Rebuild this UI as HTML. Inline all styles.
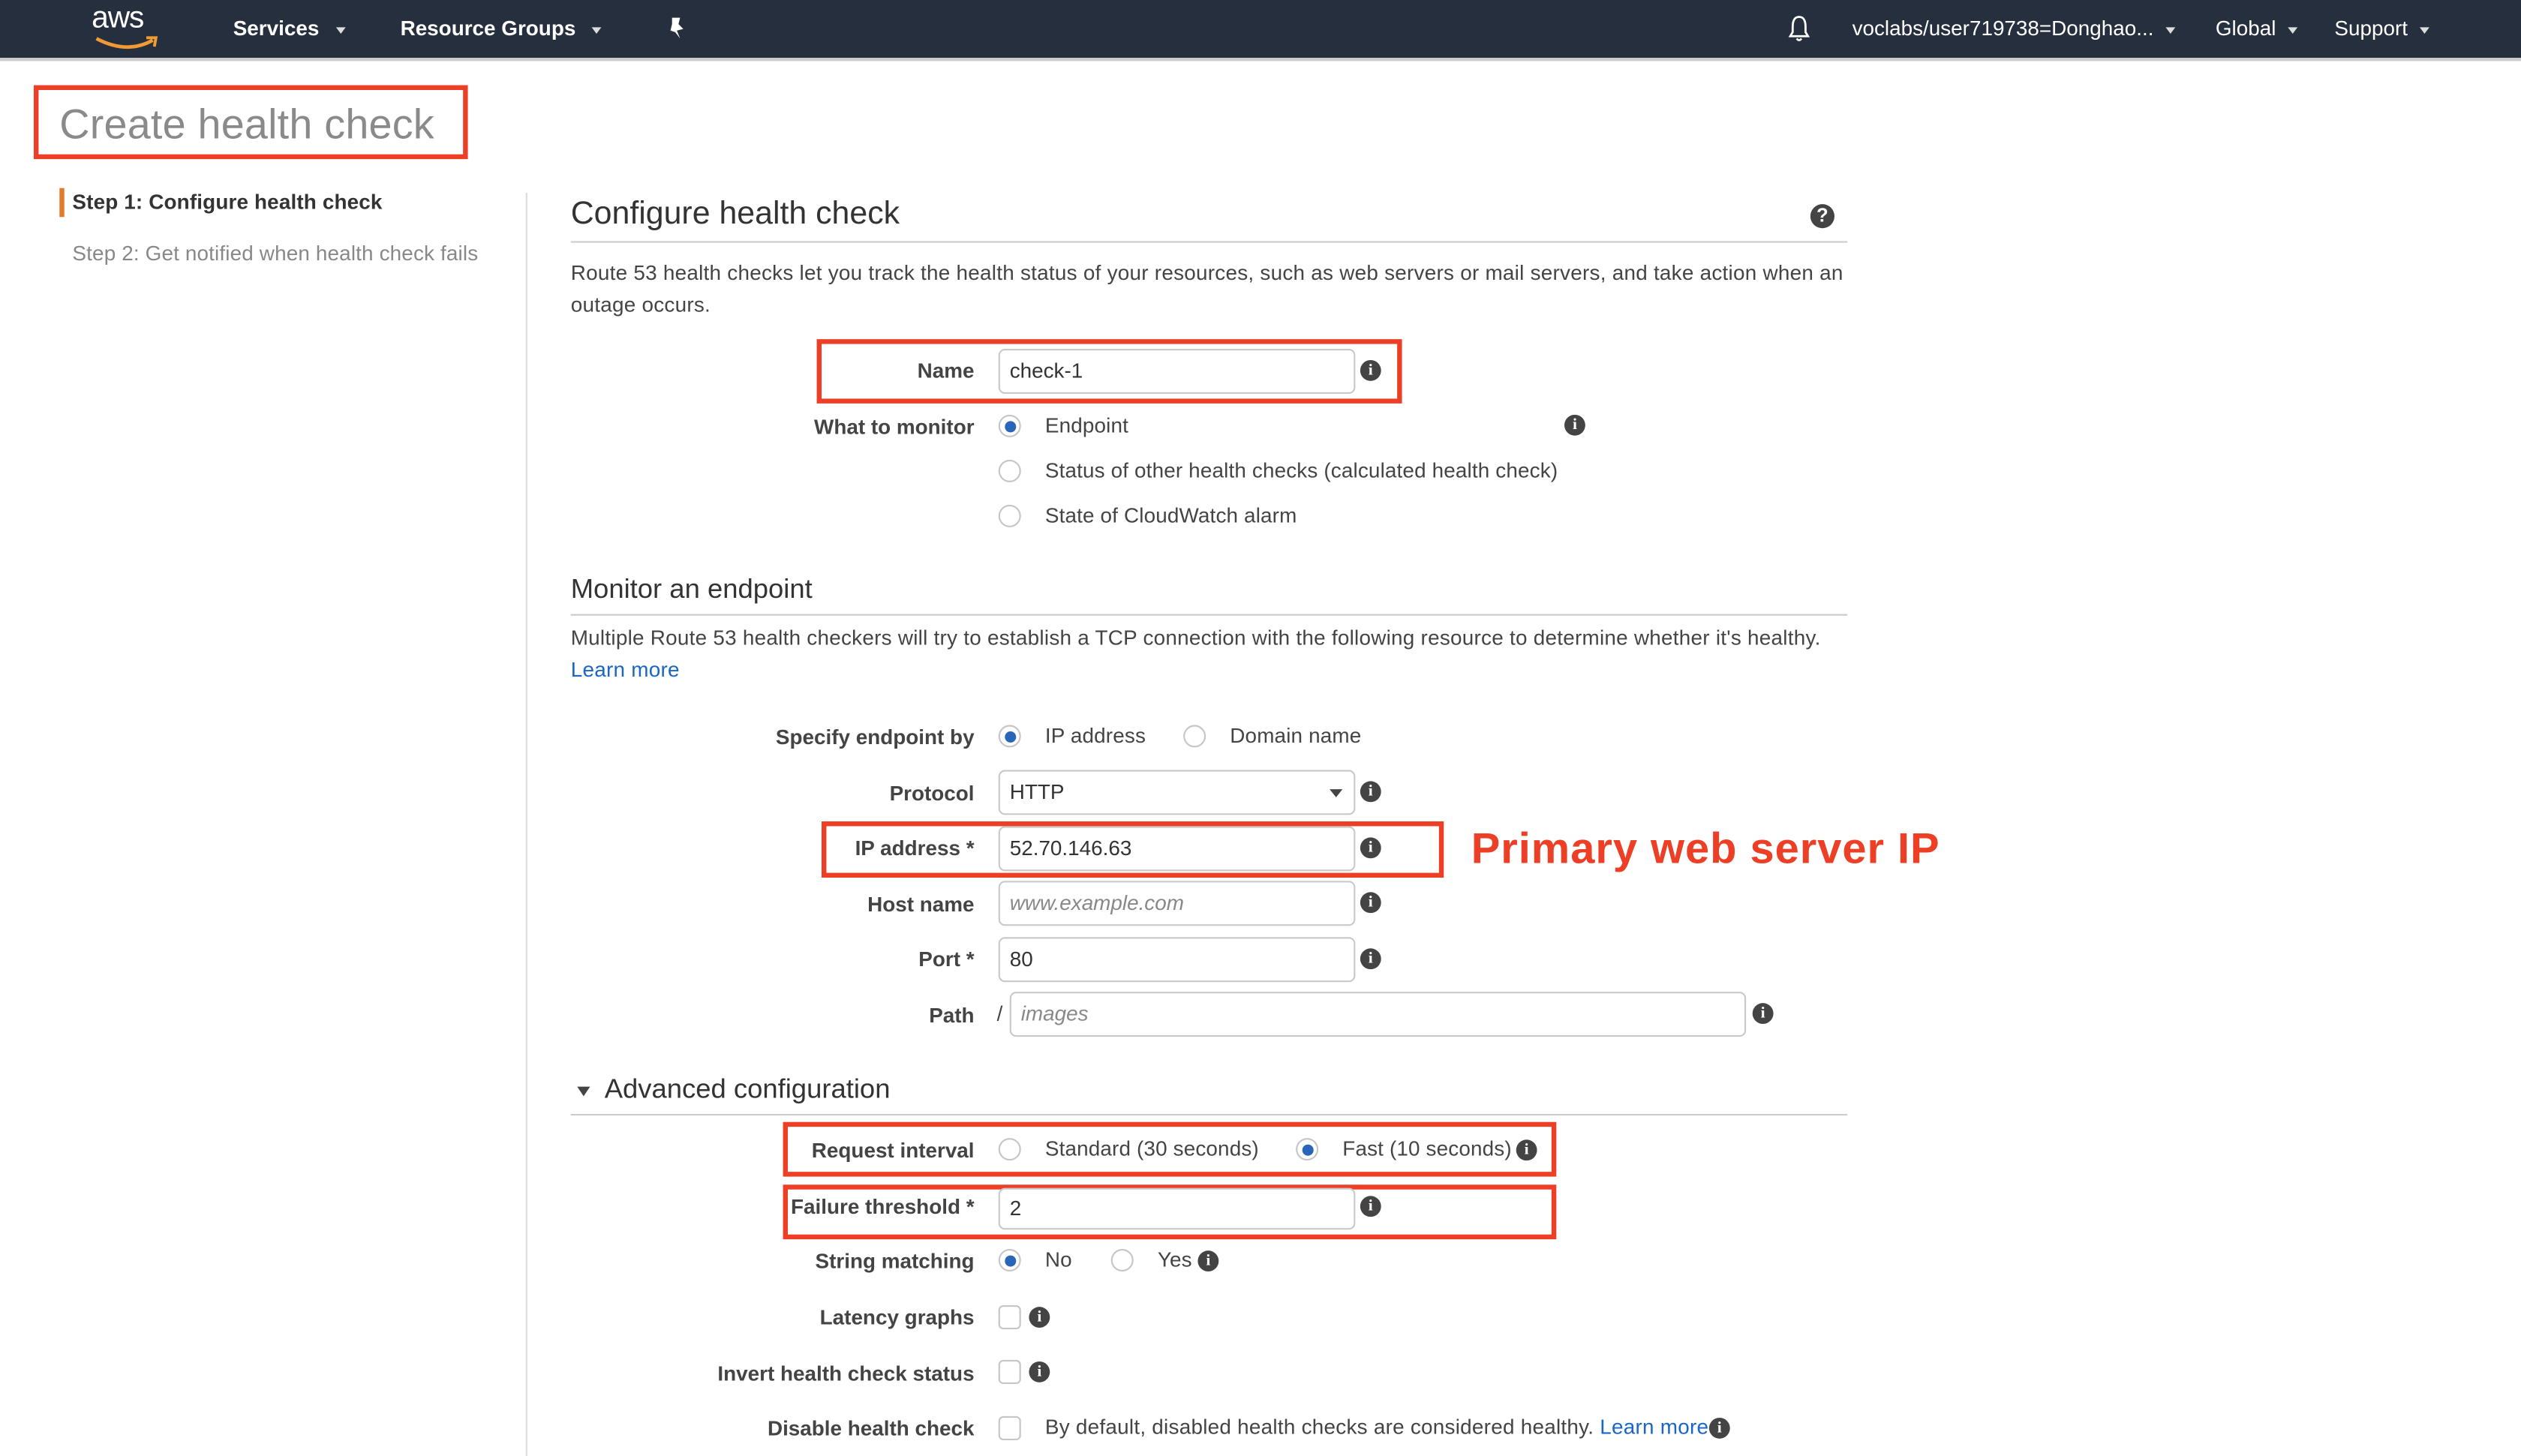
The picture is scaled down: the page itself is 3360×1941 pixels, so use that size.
<!DOCTYPE html>
<html><head><meta charset="utf-8"><style>
html,body{margin:0;padding:0;background:#fff;overflow:hidden}
#w{position:absolute;left:0;top:0;width:1568px;height:906px;transform:scale(2.142857);transform-origin:0 0;font-family:"Liberation Sans",Arial,sans-serif;color:#444}
.a{position:absolute;white-space:nowrap}
.t{position:absolute;white-space:nowrap;font-size:13px;line-height:16px;color:#444;letter-spacing:0.07px}
.l{position:absolute;white-space:nowrap;font-size:13px;line-height:16px;color:#444;font-weight:bold;right:962px;text-align:right}
.i{position:absolute;width:13px;height:13px;border-radius:50%;background:#444;color:#fff;font:bold 10px/13px "Liberation Serif",serif;text-align:center}
.r{position:absolute;width:12px;height:12px;border-radius:50%;border:1px solid #c6c6c6;background:#fff}
.r.s::after{content:"";position:absolute;left:2.5px;top:2.5px;width:7px;height:7px;border-radius:50%;background:#2a66b8}
.c{position:absolute;width:12px;height:13px;border-radius:3px;border:1px solid #c6c6c6;background:#fff}
.in{position:absolute;height:26px;border:1px solid #c9c9c9;border-radius:4px;background:#fff;font-size:13px;line-height:26px;padding-left:6px;box-sizing:content-box;color:#333}
.ph{color:#888;font-style:italic}
.red{position:absolute;border:3px solid #ec3f26;box-sizing:border-box}
.hr{position:absolute;height:1px;background:#ccc}
.nav{color:#fff;font-size:13px;line-height:16px;position:absolute;white-space:nowrap}
.car{display:inline-block;width:0;height:0;border-left:3.5px solid transparent;border-right:3.5px solid transparent;border-top:4px solid #ddd;margin-left:7px;vertical-align:middle}
</style></head><body><div id="w">
<div class="a" style="left:0;top:0;width:1568px;height:36px;background:#262f3e"></div>
<div class="a" style="left:0;top:36px;width:1568px;height:1.5px;background:#ccc"></div>
<div class="a" style="left:57px;top:1px;color:#fff;font-size:19px;line-height:22px;letter-spacing:-0.5px">aws</div>
<svg class="a" style="left:59px;top:21px" width="45" height="11" viewBox="0 0 45 11"><path d="M1 3 Q20 13 36 4" stroke="#f29a33" stroke-width="2.2" fill="none"/><path d="M32 2.5 L38 2.5 L37 8" stroke="#f29a33" stroke-width="1.8" fill="none"/></svg>
<div class="nav" style="left:145px;top:10px;font-weight:bold">Services<span class="car" style="margin-left:10px"></span></div>
<div class="nav" style="left:249px;top:10px;font-weight:bold">Resource Groups<span class="car" style="margin-left:10px"></span></div>
<svg class="a" style="left:414px;top:10px" width="14" height="16" viewBox="0 0 14 16"><path d="M4 1 L9 1 L8 5 L11 8 L7 9 L9 14 L6 10 L3 9 L4 5 Z" fill="#fff"/></svg>
<svg class="a" style="left:1111px;top:9px" width="16" height="18" viewBox="0 0 16 18"><path d="M8 1.5 C4.5 1.5 4 5 4 8 L4 11 L2.5 13.5 L13.5 13.5 L12 11 L12 8 C12 5 11.5 1.5 8 1.5 Z" stroke="#fff" stroke-width="1.3" fill="none"/><path d="M6.5 15 Q8 17 9.5 15" stroke="#fff" stroke-width="1.2" fill="none"/></svg>
<div class="nav" style="left:1152px;top:10px">voclabs/user719738=Donghao...<span class="car"></span></div>
<div class="nav" style="left:1378px;top:10px">Global<span class="car"></span></div>
<div class="nav" style="left:1452px;top:10px">Support<span class="car"></span></div>

<div class="red" style="left:21px;top:53px;width:270px;height:46px"></div>
<div class="a" style="left:37px;top:62px;font-size:26px;line-height:30px;color:#8a8a8a;letter-spacing:0.1px">Create health check</div>

<div class="a" style="left:37px;top:117px;width:3px;height:18px;background:#e07b2b"></div>
<div class="t" style="left:45px;top:118px;font-weight:bold;color:#333">Step 1: Configure health check</div>
<div class="t" style="left:45px;top:150px;color:#888">Step 2: Get notified when health check fails</div>
<div class="a" style="left:327px;top:120px;width:1px;height:786px;background:#ddd"></div>

<div class="a" style="left:355px;top:121px;font-size:20px;line-height:24px;color:#333">Configure health check</div>
<div class="a" style="left:1126px;top:127px;width:15px;height:15px;border-radius:50%;background:#444;color:#fff;font:bold 12px/15px 'Liberation Sans',sans-serif;text-align:center">?</div>
<div class="hr" style="left:355px;top:150px;width:794px"></div>
<div class="t" style="left:355px;top:160px;line-height:20px;letter-spacing:0.12px">Route 53 health checks let you track the health status of your resources, such as web servers or mail servers, and take action when an<br>outage occurs.</div>

<div class="red" style="left:508px;top:211px;width:364px;height:40px"></div>
<div class="l" style="top:223px">Name</div>
<div class="in" style="left:621px;top:217px;width:214px">check-1</div>
<div class="i" style="left:846px;top:224px">i</div>

<div class="l" style="top:258px">What to monitor</div>
<div class="r s" style="left:621px;top:258px"></div><div class="t" style="left:650px;top:257px">Endpoint</div>
<div class="i" style="left:973px;top:258px">i</div>
<div class="r" style="left:621px;top:286px"></div><div class="t" style="left:650px;top:285px">Status of other health checks (calculated health check)</div>
<div class="r" style="left:621px;top:314px"></div><div class="t" style="left:650px;top:313px">State of CloudWatch alarm</div>

<div class="a" style="left:355px;top:357px;font-size:17px;line-height:20px;color:#333">Monitor an endpoint</div>
<div class="hr" style="left:355px;top:382px;width:794px"></div>
<div class="t" style="left:355px;top:387px;line-height:20px;letter-spacing:0.12px">Multiple Route 53 health checkers will try to establish a TCP connection with the following resource to determine whether it's healthy.<br><span style="color:#1a66c7">Learn more</span></div>

<div class="l" style="top:451px">Specify endpoint by</div>
<div class="r s" style="left:621px;top:451px"></div><div class="t" style="left:650px;top:450px">IP address</div>
<div class="r" style="left:736px;top:451px"></div><div class="t" style="left:765px;top:450px">Domain name</div>

<div class="l" style="top:486px">Protocol</div>
<div class="in" style="left:621px;top:479px;width:214px">HTTP</div>
<div class="a" style="left:827px;top:491px;border-left:4px solid transparent;border-right:4px solid transparent;border-top:5px solid #444"></div>
<div class="i" style="left:846px;top:486px">i</div>

<div class="red" style="left:511px;top:511px;width:387px;height:35px"></div>
<div class="l" style="top:520px">IP address *</div>
<div class="in" style="left:621px;top:514px;width:214px">52.70.146.63</div>
<div class="i" style="left:846px;top:521px">i</div>
<div class="a" style="left:915px;top:512px;font-size:27px;line-height:32px;font-weight:bold;color:#ec3f26;letter-spacing:0.45px">Primary web server IP</div>

<div class="l" style="top:555px">Host name</div>
<div class="in ph" style="left:621px;top:548px;width:214px">www.example.com</div>
<div class="i" style="left:846px;top:555px">i</div>

<div class="l" style="top:589px">Port *</div>
<div class="in" style="left:621px;top:583px;width:214px">80</div>
<div class="i" style="left:846px;top:590px">i</div>

<div class="l" style="top:624px">Path</div>
<div class="t" style="left:620px;top:623px">/</div>
<div class="in ph" style="left:628px;top:617px;width:450px">images</div>
<div class="i" style="left:1090px;top:624px">i</div>

<div class="a" style="left:359px;top:676px;border-left:4.5px solid transparent;border-right:4.5px solid transparent;border-top:6px solid #444"></div>
<div class="a" style="left:376px;top:668px;font-size:17px;line-height:20px;color:#333">Advanced configuration</div>
<div class="hr" style="left:355px;top:693px;width:794px"></div>

<div class="red" style="left:487px;top:698px;width:481px;height:34px"></div>
<div class="l" style="top:708px">Request interval</div>
<div class="r" style="left:621px;top:708px"></div><div class="t" style="left:650px;top:707px">Standard (30 seconds)</div>
<div class="r s" style="left:806px;top:708px"></div><div class="t" style="left:835px;top:707px">Fast (10 seconds)</div>
<div class="i" style="left:943px;top:709px">i</div>

<div class="red" style="left:487px;top:737px;width:481px;height:34px"></div>
<div class="l" style="top:743px">Failure threshold *</div>
<div class="in" style="left:621px;top:739px;width:214px;height:24px;line-height:24px">2</div>
<div class="i" style="left:846px;top:744px">i</div>

<div class="l" style="top:777px">String matching</div>
<div class="r s" style="left:621px;top:777px"></div><div class="t" style="left:650px;top:776px">No</div>
<div class="r" style="left:691px;top:777px"></div><div class="t" style="left:720px;top:776px">Yes</div>
<div class="i" style="left:745px;top:778px">i</div>

<div class="l" style="top:812px">Latency graphs</div>
<div class="c" style="left:621px;top:812px"></div><div class="i" style="left:640px;top:813px">i</div>

<div class="l" style="top:847px">Invert health check status</div>
<div class="c" style="left:621px;top:846px"></div><div class="i" style="left:640px;top:847px">i</div>

<div class="l" style="top:881px">Disable health check</div>
<div class="c" style="left:621px;top:881px"></div>
<div class="t" style="left:650px;top:880px;letter-spacing:0.12px">By default, disabled health checks are considered healthy. <span style="color:#1a66c7">Learn more</span></div>
<div class="i" style="left:1063px;top:882px">i</div>
</div></body></html>
